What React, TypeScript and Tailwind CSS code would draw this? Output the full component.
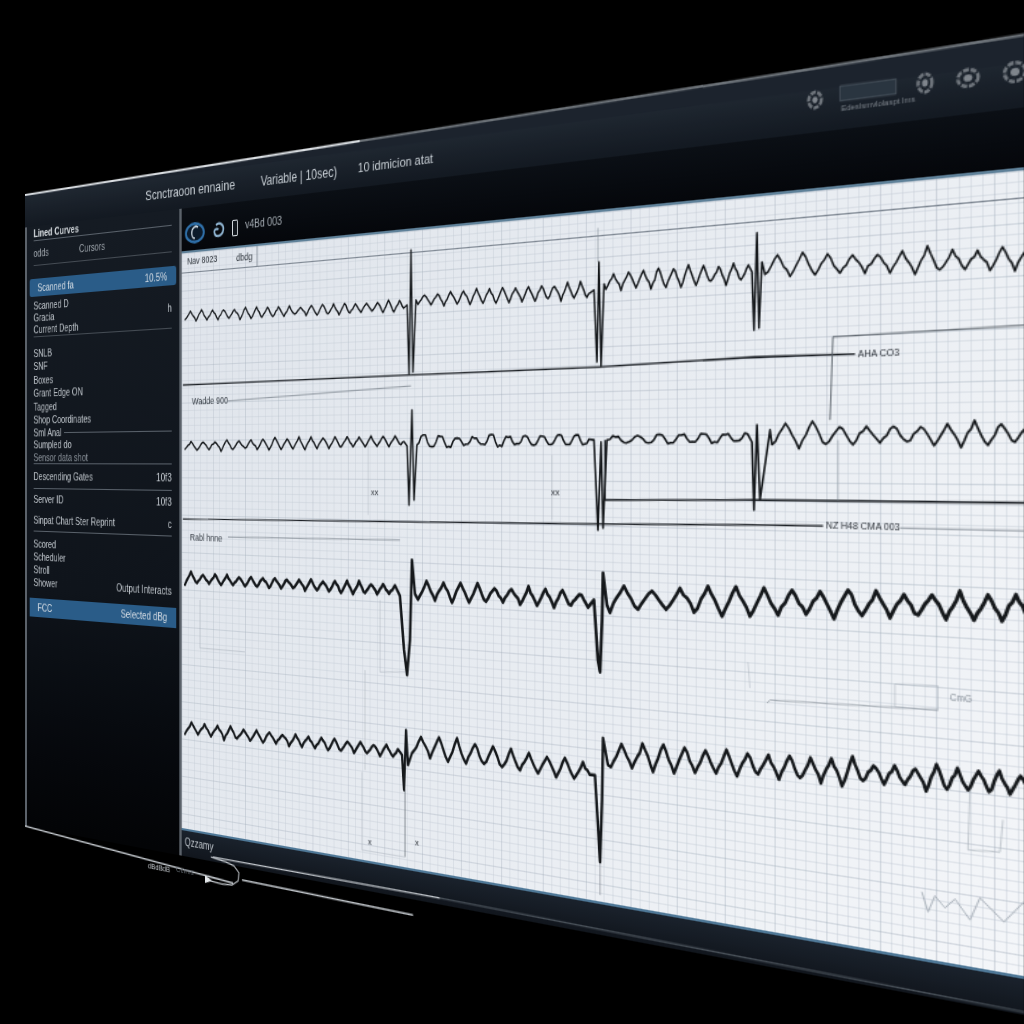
import React from 'react';

type Pt = [number, number];

// the screen plane is 1000x640 and the matrix3d class below puts it on the tilted monitor.
// chart drawings are read off the picture, so they get mapped back onto the plane here
const G = -0.34065;
const A = 658.7;
const D = -156.76;

function toPlane([x, y]: Pt): Pt {
  const u = (x - 25) / (A - G * (x - 25));
  const w = 1 + G * u;
  const v = (y * w - 195 - D * u) / 631;
  return [u * 1000, v * 640];
}

function pathOf(pts: Pt[]) {
  return pts
    .map((p, i) => {
      const [x, y] = toPlane(p);
      return `${i ? 'L' : 'M'}${x.toFixed(1)} ${y.toFixed(1)}`;
    })
    .join(' ');
}

function noise(i: number, seed: number) {
  const n = Math.sin(i * 12.9898 + seed * 78.233) * 43758.5453;
  return n - Math.floor(n) - 0.5;
}

function wave(x0: number, x1: number, y0: number, y1: number, amp: number, period: number, seed: number, flat = false) {
  const pts: Pt[] = [];
  let i = 0;
  for (let x = x0; x <= x1; x += period / 8) {
    const t = (x - x0) / (x1 - x0);
    const phase = ((x - x0) / period) % 1;
    const tri = 1 - 4 * Math.abs(phase - 0.5);
    const shape = flat ? Math.max(-0.5, Math.min(0.6, Math.sin(phase * Math.PI * 2))) * 1.4 : tri;
    const a = amp * (1 + noise(Math.floor((x - x0) / period), seed) * 0.5);
    pts.push([x, y0 + (y1 - y0) * t - shape * a + noise(i, seed) * amp * 0.3]);
    i++;
  }
  return pts;
}

const traces: { pts: Pt[]; w: number }[] = [
  {
    w: 1.5,
    pts: [
      ...wave(185, 404, 316, 306, 5, 11, 1),
      [407, 305], [409, 374], [411, 250], [413, 372], [416, 300],
      ...wave(418, 590, 300, 290, 7, 13, 2),
      [594, 290], [597, 362], [599, 262], [601, 366], [604, 284],
      ...wave(606, 750, 282, 272, 9, 15, 3),
      [752, 272], [754, 330], [757, 233], [759, 328], [762, 262],
      ...wave(765, 1030, 266, 258, 11, 25, 4),
    ],
  },
  {
    w: 1.6,
    pts: [
      ...wave(185, 404, 446, 441, 5, 12, 5),
      [407, 446], [409, 505], [412, 410], [414, 500], [417, 445],
      ...wave(419, 590, 442, 440, 6, 17, 6, true),
      [594, 440], [598, 530], [601, 442], [603, 528], [607, 440],
      ...wave(610, 750, 440, 438, 5, 22, 7, true),
      [752, 442], [754, 510], [757, 425], [760, 500], [770, 430],
      ...wave(772, 1030, 435, 434, 11, 27, 8),
    ],
  },
  {
    w: 2.7,
    pts: [
      ...wave(185, 396, 578, 590, 5, 12, 9),
      [400, 596], [404, 650], [407, 675], [410, 640], [412, 560], [415, 594],
      ...wave(418, 590, 590, 600, 8, 17, 10),
      [594, 600], [598, 660], [600, 672], [602, 620], [603, 573], [607, 605],
      ...wave(610, 1030, 598, 608, 12, 28, 11),
    ],
  },
  {
    w: 2.4,
    pts: [
      ...wave(185, 398, 728, 752, 6, 13, 12),
      [402, 755], [404, 790], [406, 730], [408, 765],
      ...wave(412, 590, 745, 772, 10, 18, 13),
      [595, 775], [598, 825], [600, 862], [602, 800], [603, 738], [608, 765],
      ...wave(611, 1030, 755, 785, 12, 21, 14),
    ],
  },
];

const thinLines: { pts: Pt[]; w: number; c: string }[] = [
  { pts: [[183, 385], [411, 375], [598, 367], [755, 357], [855, 354]], w: 1.3, c: '#1d2126' },
  { pts: [[830, 420], [833, 337], [1030, 325]], w: 0.9, c: '#555c64' },
  { pts: [[228, 401], [411, 386]], w: 0.6, c: '#5d6670' },
  { pts: [[183, 519], [411, 522], [598, 524], [755, 525], [823, 526]], w: 1.2, c: '#1d2126' },
  { pts: [[605, 440], [605, 500], [755, 500], [1030, 503]], w: 1.4, c: '#1d2126' },
  { pts: [[900, 528], [1030, 531]], w: 0.9, c: '#8a929b' },
  { pts: [[228, 537], [400, 540]], w: 0.6, c: '#5d6670' },
  // faint guide marks
  { pts: [[598, 228], [598, 262]], w: 0.6, c: '#7e8791' },
  { pts: [[411, 375], [411, 250]], w: 0.5, c: '#8a929b' },
  { pts: [[368, 440], [368, 515]], w: 0.5, c: '#aab2bc' },
  { pts: [[552, 455], [552, 520]], w: 0.5, c: '#aab2bc' },
  { pts: [[838, 440], [838, 500]], w: 0.7, c: '#9aa3ad' },
  { pts: [[380, 600], [380, 672], [405, 672]], w: 0.5, c: '#a4acb6' },
  { pts: [[200, 600], [200, 648], [245, 652]], w: 0.5, c: '#a4acb6' },
  { pts: [[365, 670], [365, 770]], w: 0.5, c: '#a4acb6' },
  { pts: [[405, 790], [405, 857]], w: 0.7, c: '#555c64' },
  { pts: [[362, 772], [362, 850], [405, 857]], w: 0.5, c: '#aab2bc' },
  { pts: [[600, 862], [600, 895]], w: 0.6, c: '#6e7680' },
  { pts: [[767, 703], [770, 700], [938, 710]], w: 0.7, c: '#8a929b' },
  { pts: [[895, 684], [938, 686], [938, 710], [895, 707], [895, 684]], w: 0.5, c: '#a4acb6' },
  { pts: [[748, 662], [750, 688]], w: 0.5, c: '#aab2bc' },
  { pts: [[970, 790], [968, 850], [1000, 852], [1003, 820]], w: 0.6, c: '#a4acb6' },
  {
    pts: [[922, 892], [928, 912], [935, 896], [945, 908], [955, 899], [970, 920], [980, 898], [1004, 922], [1024, 902]],
    w: 0.8,
    c: '#9aa3ad',
  },
];

const labels: { t: string; x: number; y: number; s: number; c: string }[] = [
  { t: 'AHA CO3', x: 858, y: 357, s: 7, c: '#2c3138' },
  { t: 'NZ H48 CMA 003', x: 826, y: 529, s: 7, c: '#2c3138' },
  { t: 'Wadde 900', x: 192, y: 404, s: 9, c: '#333a42' },
  { t: 'Rabl hnne', x: 190, y: 540, s: 9, c: '#333a42' },
  { t: 'CmG', x: 950, y: 701, s: 6.5, c: '#8a929b' },
  { t: 'xx', x: 371, y: 495, s: 8, c: '#2c3138' },
  { t: 'xx', x: 551, y: 495, s: 8, c: '#2c3138' },
  { t: 'x', x: 368, y: 845, s: 8, c: '#2c3138' },
  { t: 'x', x: 415, y: 845, s: 8, c: '#2c3138' },
  { t: 'Edeslsmvlolaspt lms', x: 841, y: 111, s: 6, c: '#7a8189' },
  { t: 'dBdBdB', x: 148, y: 868, s: 8, c: '#c9ced3' },
  { t: 'Ccrms', x: 176, y: 872, s: 8, c: '#666d75' },
];

const knobs: { x: number; y: number; rx: number; ry: number }[] = [
  { x: 815, y: 100, rx: 7, ry: 8 },
  { x: 925, y: 83, rx: 7, ry: 9 },
  { x: 968, y: 78, rx: 10, ry: 8 },
  { x: 1015, y: 72, rx: 10, ry: 9 },
];

function Row({ left, right, dim, className = 'h-[13px]' }: { left: string; right?: string; dim?: boolean; className?: string }) {
  return (
    <div className={`flex items-center justify-between ${className}`}>
      <span className={dim ? 'text-[#8f979f]' : 'text-[#c2c8ce]'}>{left}</span>
      {right && <span className="text-[#c2c8ce]">{right}</span>}
    </div>
  );
}

function Sidebar() {
  return (
    <aside className="w-[220px] shrink-0 border-x-[3px] border-x-[#5b626a] bg-linear-to-b from-[#151b23] via-[#0f141b] via-60% to-[#030406] px-[10px] text-[10.5px] leading-none">
      <div className="flex h-[15px] items-center border-b border-[#59616a] font-bold text-[#d5dade]">Lined Curves</div>
      <div className="flex h-[25px] items-center gap-[44px] border-b border-[#454c54] text-[#a0a7ae]">
        <span>odds</span>
        <span>Cursors</span>
      </div>
      <div className="-mx-[6px] mt-[13px] flex h-[18px] items-center justify-between rounded-[3px] bg-[#2a5c88] px-[12px] text-[#d7dee5]">
        <span>Scanned fa</span>
        <span>10.5%</span>
      </div>
      <div className="border-b border-[#454c54] pt-[3px] pb-[1px]">
        <Row left="Scanned D" className="h-[12px]" />
        <Row left="Gracia" right="h" className="h-[12px]" />
        <Row left="Current Depth" className="h-[12px]" />
      </div>
      <div className="pt-[9px]">
        <Row left="SNLB" className="h-[13.5px]" />
        <Row left="SNF" className="h-[13.5px]" />
        <Row left="Boxes" className="h-[13.5px]" />
        <Row left="Grant Edge ON" className="h-[13.5px]" />
        <Row left="Tagged" className="h-[13.5px]" />
        <Row left="Shop Coordinates" className="h-[13.5px]" />
      </div>
      <div className="flex h-[12px] items-center gap-1">
        <span className="text-[#c2c8ce]">Sml Anal</span>
        <span className="h-px flex-1 bg-[#59616a]" />
      </div>
      <div className="border-b border-[#59616a]">
        <Row left="Sumpled do" className="h-[12.5px]" />
        <Row left="Sensor data shot" dim className="h-[12.5px]" />
      </div>
      <div className="border-b border-[#59616a]">
        <Row left="Descending Gates" right="10f3" className="h-[24px]" />
      </div>
      <div className="border-b border-[#59616a]">
        <Row left="Server ID" right="10f3" className="h-[21px]" />
        <Row left="Sinpat Chart Ster   Reprint" right="c" className="h-[21px]" />
      </div>
      <div className="pt-[6px]">
        <Row left="Scored" className="h-[13px]" />
        <Row left="Scheduler" className="h-[13px]" />
        <Row left="Stroll" className="h-[13px]" />
        <Row left="Shower" right="Output Interacts" className="h-[13px]" />
      </div>
      <div className="-mx-[6px] mt-[9px] flex h-[19px] items-center justify-between bg-[#2a5c88] px-[12px] text-[#d7dee5]">
        <span>FCC</span>
        <span>Selected dBg</span>
      </div>
    </aside>
  );
}

function Toolbar() {
  return (
    <div className="flex h-[40px] items-center bg-linear-to-b from-[#0b0f15] to-[#05070b] pt-[7px] pl-[4px]">
      <svg viewBox="0 0 26 20" className="h-[20px] w-[26px]">
        <ellipse cx="13" cy="10" rx="11.5" ry="8.6" fill="#0c1a2a" stroke="#2f6fa8" strokeWidth="2.6" />
        <path d="M17 5 C14 3 9 5 9 10 C9 13 11 15 13 15" fill="none" stroke="#dbe6ef" strokeWidth="1.6" />
      </svg>
      <svg viewBox="0 0 15 16" className="ml-[10px] h-[16px] w-[15px]">
        <path d="M4 3 C8 0 14 3 13 8 C12 14 3 15 2 10 C1 7 4 6 7 7" fill="none" stroke="#8fb4d1" strokeWidth="2.2" />
      </svg>
      <div className="ml-[9px] h-[15px] w-[7px] rounded-[1px] border border-[#d3d9de] bg-[#11161c]" />
      <span className="ml-[9px] -translate-y-[2px] text-[10.5px] text-[#a8afb6]">v4Bd 003</span>
    </div>
  );
}

function Chart() {
  return (
    <div className="h-[541px] border-t-2 border-t-[#5f8199] bg-[#e6eaf0] [background-image:linear-gradient(#8f9bab28_1px,transparent_1px),linear-gradient(90deg,#8f9bab28_1px,transparent_1px),linear-gradient(#c6cdd770_1px,transparent_1px),linear-gradient(90deg,#c6cdd770_1px,transparent_1px),linear-gradient(120deg,#dfe4eb,#e9edf2_60%,#f4f6f9)] [background-size:40px_35px,40px_35px,8px_7px,8px_7px,100%_100%]">
      <div className="flex h-[19px] items-center border-b border-[#7f8893] pl-[7px] text-[9px] text-[#2d333a]">
        <span className="w-[46px]">Nav 8023</span>
        <span className="ml-[16px] w-[26px] border-r border-[#7f8893] leading-[18px]">dbdg</span>
      </div>
    </div>
  );
}

export default function App() {
  return (
    <div className="h-[1024px] w-[1024px] overflow-hidden bg-black font-['Liberation_Sans',sans-serif]">
      <div className="relative h-[640px] w-[1000px] origin-top-left blur-[0.35px] [transform:matrix3d(0.65018,-0.15676,0,-0.00034065,0,0.98594,0,0,0,0,1,0,25,195,0,1)]">
        <header className="flex h-[33px] items-center bg-linear-to-b from-[#1f2731] to-[#131921] pl-[172px] text-[#c9d0d6]">
          <span className="w-[120px] text-[13px] whitespace-nowrap">Scnctraoon ennaine</span>
          <span className="ml-[27px] w-[93px] text-[12px] whitespace-nowrap">Variable | 10sec)</span>
          <span className="ml-[19px] w-[85px] text-[11.5px] whitespace-nowrap">10 idmicion atat</span>
        </header>
        <div className="flex h-[607px]">
          <Sidebar />
          <main className="flex min-w-0 flex-1 flex-col">
            <Toolbar />
            <Chart />
            <footer className="h-[26px] border-t-2 border-t-[#4f7897] bg-linear-to-b from-[#1a222c] to-[#11161d] pt-[3px] pl-[4px] text-[10px] text-[#c2c8ce]">
              Qzzamy
            </footer>
          </main>
        </div>

        {/* everything read straight off the picture: traces, guides, chart labels, frame lines */}
        <svg className="pointer-events-none absolute top-0 left-0 h-[640px] w-[1000px] overflow-visible" fill="none">
          <path d={pathOf([[25, 195], [1024, 35], [1024, 62]]) + ' Z'} fill="#1c232d" />
          <path d={pathOf([[25, 195], [360, 141]])} stroke="#dde1e5" strokeWidth="2" />
          <path d={pathOf([[360, 141], [1024, 35]])} stroke="#6d7379" strokeWidth="2" />
          <path d={pathOf([[25, 826], [233, 883]])} stroke="#c4c9ce" strokeWidth="1.6" />
          <path d={pathOf([[242, 880], [413, 915]])} stroke="#c4c9ce" strokeWidth="1.4" />
          <path d={pathOf([[213, 857], [440, 898]])} stroke="#c4c9ce" strokeWidth="1.2" />
          <path d={pathOf([[440, 898], [1024, 1012]])} stroke="#4a525a" strokeWidth="1.2" />
          <path d={pathOf([[211, 857], [226, 862], [234, 866], [239, 873], [238, 881], [232, 885], [222, 884], [207, 880]])} stroke="#c4c9ce" strokeWidth="1.2" />
          <path d={pathOf([[205, 883], [205, 875], [212, 881]]) + ' Z'} fill="#e4e7ea" />

          {thinLines.map((l, i) => (
            <path key={i} d={pathOf(l.pts)} stroke={l.c} strokeWidth={l.w} strokeLinejoin="round" />
          ))}
          {traces.map((t, i) => (
            <path key={i} d={pathOf(t.pts)} stroke="#15181b" strokeWidth={t.w} strokeLinejoin="round" strokeLinecap="round" />
          ))}
          {labels.map((l, i) => {
            const [x, y] = toPlane([l.x, l.y]);
            return (
              <text key={i} x={x} y={y} fontSize={l.s} fill={l.c}>
                {l.t}
              </text>
            );
          })}

          <path d={pathOf([[840, 86], [896, 79], [896, 94], [840, 101]]) + ' Z'} fill="#2a3540" stroke="#59636d" strokeWidth="0.6" />
          {knobs.map((k, i) => {
            const [x, y] = toPlane([k.x, k.y]);
            return (
              <g key={i}>
                <ellipse cx={x} cy={y} rx={k.rx * 0.7} ry={k.ry * 0.7} stroke="#6f757c" strokeWidth="2.4" strokeDasharray="4 1.2" />
                <ellipse cx={x} cy={y} rx={k.rx * 0.3} ry={k.ry * 0.3} fill="#7f858c" />
              </g>
            );
          })}
        </svg>
      </div>
    </div>
  );
}
